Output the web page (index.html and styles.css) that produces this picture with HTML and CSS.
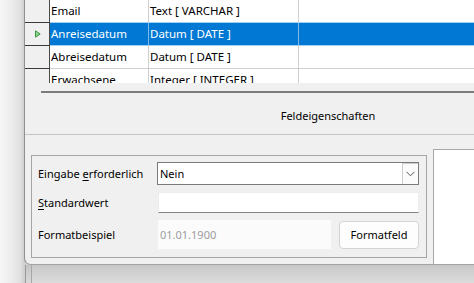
FILE: index.html
```html
<!DOCTYPE html>
<html lang="de">
<head>
<meta charset="utf-8">
<title>Tabellenentwurf</title>
<link rel="stylesheet" href="styles.css">
</head>
<body>
<div class="screen">
  <div class="window">
    <div class="grid">
      <div class="row pre-sel">
        <div class="rh"></div>
        <div class="c c1">Email</div>
        <div class="c c2">Text [ VARCHAR ]</div>
        <div class="c c3"></div>
      </div>
      <div class="row sel">
        <div class="rh"><svg class="arrow" width="6" height="8" viewBox="0 0 6 8"><polygon points="0.5,0.8 5.2,4 0.5,7.2" fill="#8fd08f" stroke="#3f9a3f" stroke-width="1"/></svg></div>
        <div class="c c1">Anreisedatum</div>
        <div class="c c2">Datum [ DATE ]</div>
        <div class="c c3"></div>
      </div>
      <div class="row">
        <div class="rh"></div>
        <div class="c c1">Abreisedatum</div>
        <div class="c c2">Datum [ DATE ]</div>
        <div class="c c3"></div>
      </div>
      <div class="row">
        <div class="rh"></div>
        <div class="c c1">Erwachsene</div>
        <div class="c c2">Integer [ INTEGER ]</div>
        <div class="c c3"></div>
      </div>
    </div>
    <div class="props-head">
      <div class="splitter"></div>
      <div class="title">Feldeigenschaften</div>
    </div>
    <div class="props">
      <div class="group">
        <div class="label">Eingabe <u>e</u>rforderlich</div>
        <div class="select">
          <span class="select-text">Nein</span>
          <span class="select-btn"><svg width="9" height="6" viewBox="0 0 9 6"><polyline points="0.5,0.8 4.5,4.8 8.5,0.8" fill="none" stroke="#555" stroke-width="1"/></svg></span>
        </div>
        <div class="label"><u>S</u>tandardwert</div>
        <div class="input"></div>
        <div class="label">Formatbeispiel</div>
        <div class="fmt-row">
          <div class="sample">01.01.1900</div>
          <div class="button">Formatfeld</div>
        </div>
      </div>
      <div class="help"></div>
    </div>
  </div>
  <div class="under">
    <div class="under-inner"></div>
  </div>
</div>
</body>
</html>
```

FILE: styles.css
```css
html, body {
  margin: 0;
  padding: 0;
}

body {
  font-family: "Noto Sans", "Open Sans", sans-serif;
  font-size: 11px;
  color: #000;
}

.screen {
  width: 474px;
  height: 283px;
  overflow: hidden;
  display: flex;
  flex-direction: column;
  background: linear-gradient(to right, #f7f7f7 0px, #ececec 12px, #dedede 21px, #cfcfcf 24px);
}

.window {
  margin-left: 24px;
  height: 265px;
  box-sizing: border-box;
  border-left: 1px solid #8f8f8f;
  border-bottom: 1px solid #a3a3a3;
  border-bottom-left-radius: 7px;
  background: #f0f0f0;
  overflow: hidden;
  display: flex;
  flex-direction: column;
  flex: none;
}

/* ---------- table grid ---------- */
.grid {
  height: 83px;
  overflow: hidden;
  background: #fff;
  flex: none;
}

.row {
  display: flex;
  height: 23px;
}

.rh {
  width: 24px;
  flex: none;
  background: #f0f0f0;
  border-right: 1px solid #4a4a4a;
  border-bottom: 1px solid #3a3a3a;
  box-sizing: content-box;
  height: 22px;
  display: flex;
  align-items: center;
  justify-content: center;
}

.arrow {
  margin-left: 1px;
}

.c {
  height: 22px;
  border-bottom: 1px solid #cfcfcf;
  box-sizing: content-box;
  line-height: 22px;
  padding-left: 1px;
  white-space: nowrap;
  overflow: hidden;
  font-size: 11.5px;
}

.c1 {
  width: 97px;
  border-right: 1px solid #cfcfcf;
}

.c2 {
  width: 148px;
  border-right: 1px solid #cfcfcf;
}

.c3 {
  flex: 1;
}

.pre-sel .c {
  border-bottom-color: #a3d0f2;
}

.sel .c {
  background: #0078d4;
  color: #fff;
  border-bottom-color: #a3d0f2;
}

.sel .c1,
.sel .c2 {
  border-right-color: #7fb9e6;
}

/* ---------- properties header ---------- */
.props-head {
  height: 52px;
  border-bottom: 1px solid #c4c4c4;
  padding-top: 8px;
  box-sizing: border-box;
  flex: none;
}

.splitter {
  height: 2px;
  margin-left: 16px;
  background: #7c7c7c;
}

.title {
  width: 200px;
  margin-left: 203px;
  margin-top: 15px;
  text-align: center;
  line-height: 16px;
}

/* ---------- properties body ---------- */
.props {
  flex: 1;
  display: flex;
  padding-left: 6px;
  align-items: flex-start;
}

.group {
  width: 396px;
  height: 103px;
  margin-top: 20px;
  box-sizing: border-box;
  border: 1px solid #a5a5a5;
  padding: 6px 7px 0 6px;
  display: grid;
  grid-template-columns: 119px 1fr;
  grid-template-rows: 23px 21px 29px;
  row-gap: 7px;
  align-items: center;
  flex: none;
}

.label {
  white-space: nowrap;
  line-height: 16px;
}

.label u {
  text-underline-offset: 2px;
}

.select {
  height: 23px;
  box-sizing: border-box;
  border: 1px solid #7a7a7a;
  background: #fff;
  display: flex;
  align-items: stretch;
}

.select-text {
  flex: 1;
  line-height: 21px;
  padding-left: 2px;
}

.select-btn {
  width: 15px;
  border: 1px solid #cdcdcd;
  border-right: none;
  border-bottom: none;
  background: #fbfbfb;
  display: flex;
  align-items: center;
  justify-content: center;
}

.input {
  height: 21px;
  margin-left: 1px;
  box-sizing: border-box;
  background: #fff;
  border: 1px solid #ececec;
  border-bottom: 1px solid #858585;
}

.fmt-row {
  display: flex;
  align-items: center;
  gap: 8px;
  margin-left: 1px;
  height: 29px;
}

.sample {
  width: 173px;
  height: 29px;
  box-sizing: border-box;
  background: #fbfbfb;
  color: #9c9c9c;
  line-height: 29px;
  padding-left: 2px;
}

.button {
  width: 80px;
  height: 28px;
  box-sizing: border-box;
  border: 1px solid #d3d3d3;
  border-radius: 4px;
  background: #fdfdfd;
  display: flex;
  align-items: center;
  justify-content: center;
}

.help {
  flex: 1;
  margin-left: 6px;
  margin-top: 14px;
  height: 120px;
  background: #fff;
  border: 1px solid #a8a8a8;
  border-right: none;
}

/* ---------- area below the window ---------- */
.under {
  flex: 1;
  margin-left: 25px;
  background: linear-gradient(to bottom, #c5c5c5, #d9d9d9);
  border-left: 1px solid #9a9a9a;
  padding-left: 5px;
  display: flex;
}

.under-inner {
  flex: 1;
  border-left: 1px solid #a8a8a8;
  background: linear-gradient(to bottom, #c8c8c8, #dcdcdc);
}
```
